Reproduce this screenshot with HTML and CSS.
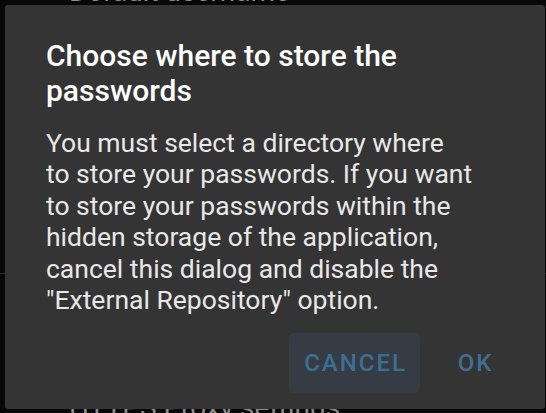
FILE: index.html
```html
<!DOCTYPE html>
<html>
<head>
<meta charset="utf-8">
<link rel="stylesheet" href="styles.css">
</head>
<body>
<div class="list">
  <div class="item item-top">Default username</div>
  <div class="divider"></div>
  <div class="item item-bottom">HTTPS Proxy settings</div>
</div>
<div class="dialog">
  <h1 class="title">Choose where to store the<br>passwords</h1>
  <p class="message">You must select a directory where<br>to store your passwords. If you want<br>to store your passwords within the<br>hidden storage of the application,<br>cancel this dialog and disable the<br>"External Repository" option.</p>
  <div class="actions">
    <button class="btn btn-focus">CANCEL</button>
    <button class="btn btn-ok">OK</button>
  </div>
</div>
</body>
</html>
```
FILE: styles.css
```css
html, body {
  margin: 0;
  padding: 0;
  width: 546px;
  height: 413px;
  overflow: hidden;
  background: #070707;
  font-family: Roboto, "Noto Sans", sans-serif;
}
.list {
  position: relative;
  height: 413px;
}
.item {
  color: #8c8c8c;
  font-size: 28px;
  padding-left: 69px;
  line-height: 30px;
  white-space: nowrap;
}
.item-top {
  margin-top: -23px;
}
.divider {
  height: 1px;
  background: #262626;
  margin-top: 266px;
}
.item-bottom {
  margin-top: 119px;
}
.dialog {
  position: absolute;
  left: 5px;
  top: 5px;
  width: 540px;
  height: 404px;
  background: #343434;
  border-radius: 3px;
  box-sizing: border-box;
  padding: 33px 10px 0 41px;
  display: flex;
  flex-direction: column;
}
.title {
  margin: 0;
  color: #ffffff;
  font-size: 30px;
  font-weight: 500;
  line-height: 35px;
  white-space: nowrap;
}
.message {
  margin: 19px 0 0;
  color: #e8e8e8;
  font-size: 26.5px;
  line-height: 31.4px;
  white-space: nowrap;
}
.actions {
  margin-top: auto;
  margin-bottom: 16px;
  display: flex;
  justify-content: flex-end;
  gap: 8px;
  margin-right: 14px;
}
.btn {
  border: 0;
  background: transparent;
  color: #3d6f93;
  font-family: Roboto, sans-serif;
  font-size: 24px;
  font-weight: 500;
  letter-spacing: 2px;
  height: 60px;
  padding: 0 13px 0 15px;
  border-radius: 5px;
}
.btn-ok {
  width: 93px;
  padding: 0 0 0 2px;
}
.btn-focus {
  background: #353c43;
}
```
